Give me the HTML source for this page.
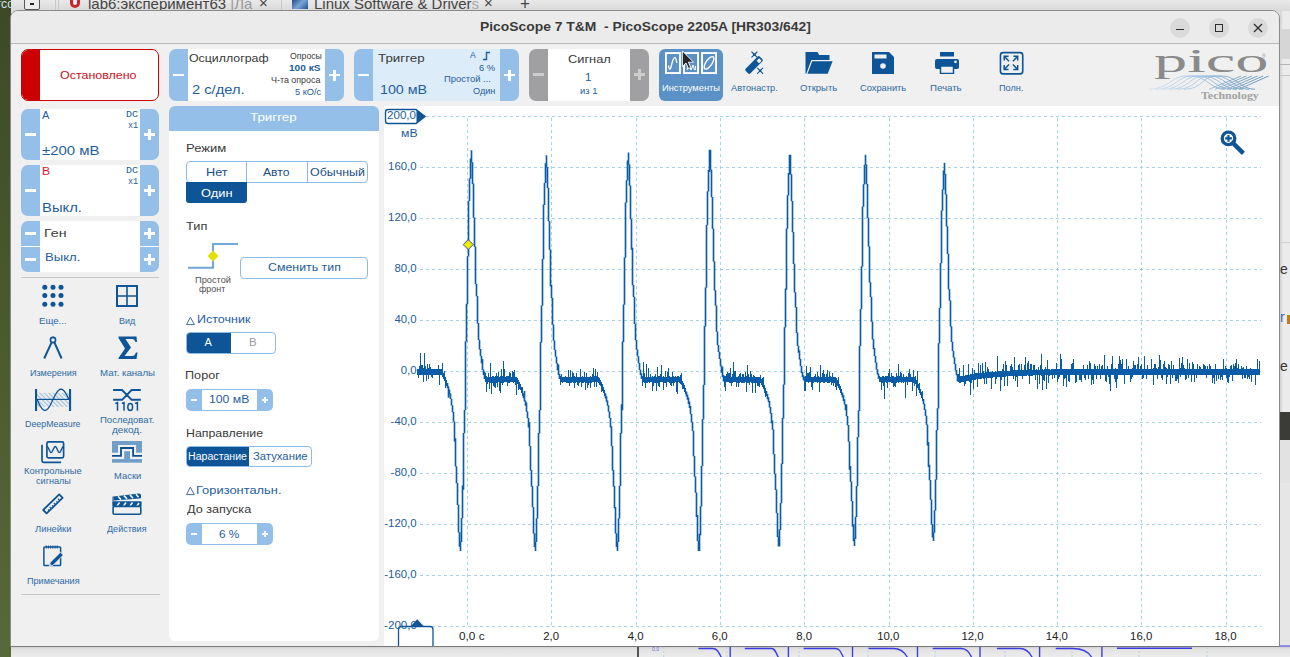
<!DOCTYPE html>
<html><head><meta charset="utf-8">
<style>
*{margin:0;padding:0;box-sizing:border-box}
html,body{width:1290px;height:657px;overflow:hidden;background:#dedede}
body{position:relative;font-family:"Liberation Sans",sans-serif;}
.a{position:absolute}
.t{position:absolute;white-space:pre;line-height:1}
.blue{color:#1d5e9c}
.pm{position:absolute;background:#93bfe8}
.pm:before,.pm:after{content:"";position:absolute;background:#fff;left:50%;top:50%}
.minus:before{width:11px;height:2.5px;margin-left:-5.5px;margin-top:-1.25px}
.minus:after{display:none}
.plus:before{width:11px;height:2.5px;margin-left:-5.5px;margin-top:-1.25px}
.plus:after{width:2.5px;height:11px;margin-left:-1.25px;margin-top:-5.5px}
.lbl{position:absolute;white-space:nowrap;line-height:1;font-size:10px;color:#2b6aa6;transform-origin:50% 0}
</style></head><body>
<!-- ===== background outside window ===== -->
<div class="a" style="left:0;top:0;width:1290px;height:11px;background:linear-gradient(#e9e9e9,#d9d9d9)"></div>
<div class="a" style="left:0;top:0;width:11px;height:657px;background:linear-gradient(#3d4926,#4a5a2f 50%,#57683a)"></div>
<div class="t" style="left:-3px;top:-2px;font-size:12px;color:#cfe3f5">гсо</div>
<!-- tabs -->
<div class="a" style="left:24px;top:-2px;width:16px;height:11.5px;border:1.5px solid #555;border-radius:2px;background:#ececec"></div>
<div class="a" style="left:30px;top:3px;width:4px;height:1.5px;background:#222"></div>
<div class="a" style="left:55px;top:0;width:1px;height:10px;background:#c8c8c8"></div>
<div class="a" style="left:58px;top:0;width:1px;height:10px;background:#c8c8c8"></div>
<div class="a" style="left:70px;top:0;width:10px;height:8px;background:#c9252b;border-radius:0 0 5px 5px"></div>
<div class="a" style="left:73px;top:0;width:4px;height:5px;background:#eee;border-radius:0 0 2px 2px"></div>
<div class="t" style="left:88px;top:-4.5px;font-size:15px;color:#444">lab6:эксперимент63 <span style="color:#999">|Ла</span></div>
<div class="t" style="left:259px;top:-5px;font-size:15px;color:#444">×</div>
<div class="a" style="left:281px;top:0;width:1px;height:10px;background:#c8c8c8"></div>
<div class="a" style="left:292px;top:0;width:16px;height:9px;background:linear-gradient(135deg,#1e4f8a,#7aa6d6,#1e4f8a)"></div>
<div class="t" style="left:314px;top:-4.5px;font-size:15px;color:#444">Linux Software &amp; Driver<span style="color:#aaa">s</span></div>
<div class="t" style="left:484px;top:-5px;font-size:15px;color:#444">×</div>
<div class="t" style="left:520px;top:-5px;font-size:17px;color:#444">+</div>
<!-- right strip -->
<div class="a" style="left:1280px;top:11px;width:10px;height:646px;background:#ebebeb"></div>
<div class="a" style="left:1280px;top:11px;width:3px;height:646px;background:linear-gradient(90deg,#d0d0d0,#ebebeb)"></div>
<div class="a" style="left:1280px;top:29px;width:10px;height:30px;background:#d6d6d6"></div>
<div class="a" style="left:1280px;top:64px;width:10px;height:1px;background:#b5b5b5"></div>
<div class="a" style="left:1280px;top:75px;width:10px;height:1px;background:#c5c5c5"></div>
<div class="a" style="left:1280px;top:242px;width:10px;height:1px;background:#cfcfcf"></div>
<div class="a" style="left:1280px;top:412px;width:10px;height:28px;background:#3b3b38"></div>
<div class="a" style="left:1280px;top:440px;width:10px;height:43px;background:#e2e2e2"></div>
<div class="a" style="left:1280px;top:483px;width:10px;height:163px;background:#e6e6e6"></div>
<div class="t" style="left:1280px;top:262px;font-size:14px;color:#333">e</div>
<div class="t" style="left:1280px;top:310px;font-size:14px;color:#2a6fb0">r</div>
<div class="a" style="left:1287px;top:315px;width:3px;height:9px;background:#c87a1a"></div>
<div class="t" style="left:1280px;top:359px;font-size:14px;color:#333">e</div>
<!-- bottom strip -->
<div class="a" style="left:11px;top:646px;width:1279px;height:11px;background:linear-gradient(#c9c9c9,#e2e2e2 3px,#ececec)"></div>
<div class="a" style="left:637px;top:646px;width:2px;height:11px;background:#555"></div>
<svg class="a" style="left:0;top:0" width="1290" height="657">
 <g stroke="#b8d4dc" stroke-width="1" stroke-dasharray="2 2"><path d="M663.7,647V657M727,647V657M799,647V657M868,647V657M935,647V657M1005,647V657M1072,647V657M1139,647V657M1207,647V657"/></g>
 <path d="M698.4,648.5H712.7C717.2,648.5 718.6,652 721.6,658M730.2,646.5V658M744.8,648.5H771.5C775.0,648.5 775.6,652 778.6,658M788.4,646.5V658M803.6,648.5H835.7C839.7,648.5 840.7,652 843.7,658M852.5,646.5V658M868.5,648.5H893.5C900.6,648.5 904.7,652 907.7,658M917.5,646.5V658M932.7,648.5H961.2C966.6,648.5 969.0,652 972.0,658M980,646.5V658M996.9,648.5H1020C1026.2,648.5 1029.5,652 1032.5,658M1039.6,646.5V658M1055.7,648.5H1072.5C1082.2,648.5 1089.0,652 1092.0,658M1101.9,646.5V658M1117,648.3H1192" fill="none" stroke="#3b3be6" stroke-width="1.4"/>
 <path d="M1280,646H1290" stroke="#5a5af0" stroke-width="1.2"/>
 <text x="652" y="651" font-size="5" fill="#6a6ae8" font-family="Liberation Sans">0,0</text>
</svg>
<!-- ===== window ===== -->
<div class="a" style="left:10px;top:10px;width:1270px;height:637px;border:1px solid #8a8a8a;border-radius:8px 8px 0 0;background:#f0f0f0;overflow:hidden">
</div>
<!-- title bar -->
<div class="a" style="left:11px;top:11px;width:1268px;height:33px;background:#ebebeb;border-radius:7px 7px 0 0;border-bottom:1px solid #bababa"></div>
<div class="a" style="left:1170px;top:18px;width:20px;height:20px;border-radius:50%;background:#dadada"></div>
<div class="a" style="left:1176px;top:29px;width:8px;height:1px;background:#2e2e2e"></div>
<div class="a" style="left:1209px;top:18px;width:20px;height:20px;border-radius:50%;background:#dadada"></div>
<div class="a" style="left:1215px;top:24px;width:8px;height:8px;border:1.3px solid #2e2e2e"></div>
<div class="a" style="left:1248px;top:18px;width:20px;height:20px;border-radius:50%;background:#dadada"></div>
<svg class="a" style="left:1248px;top:18px" width="20" height="20"><path d="M6,6L14,14M14,6L6,14" stroke="#2e2e2e" stroke-width="1.3"/></svg>

<!-- ===== toolbar ===== -->
<!-- stopped -->
<div class="a" style="left:21px;top:49px;width:138px;height:52px;border:1.3px solid #cc0000;border-radius:7px;background:#fff;overflow:hidden">
 <div class="a" style="left:0;top:0;width:18px;height:52px;background:#cc0000"></div>
</div>

<!-- oscilloscope -->
<div class="a" style="left:169px;top:49px;width:175px;height:52px;border-radius:7px;background:#93bfe8;overflow:hidden">
 <div class="a" style="left:19px;top:0;width:137px;height:52px;background:#fff"></div>
</div>
<div class="pm minus" style="left:169px;top:49px;width:19px;height:52px;background:transparent"></div>
<div class="pm plus" style="left:325px;top:49px;width:19px;height:52px;background:transparent"></div>

<!-- trigger -->
<div class="a" style="left:354px;top:49px;width:165px;height:52px;border-radius:7px;background:#93bfe8;overflow:hidden">
 <div class="a" style="left:19px;top:0;width:127px;height:52px;background:#ddecf9"></div>
</div>
<div class="pm minus" style="left:354px;top:49px;width:19px;height:52px;background:transparent"></div>
<div class="pm plus" style="left:500px;top:49px;width:19px;height:52px;background:transparent"></div>
<svg class="a" style="left:482px;top:51px" width="10" height="10"><path d="M1,8.5H4.5V1.5H8" fill="none" stroke="#1d5e9c" stroke-width="1.4"/></svg>

<!-- signal -->
<div class="a" style="left:529px;top:49px;width:120px;height:52px;border-radius:7px;background:#a0a0a3;overflow:hidden">
 <div class="a" style="left:19px;top:0;width:82px;height:52px;background:#fff"></div>
</div>
<div class="a" style="left:533px;top:73px;width:11px;height:2.5px;background:#cdcdcd"></div>
<div class="a" style="left:634px;top:73px;width:11px;height:2.5px;background:#cdcdcd"></div>
<div class="a" style="left:638.25px;top:68.5px;width:2.5px;height:11px;background:#cdcdcd"></div>

<!-- instruments -->
<div class="a" style="left:659px;top:49px;width:64px;height:52px;border-radius:6px;background:#5b91c6"></div>
<svg class="a" style="left:659px;top:48px" width="64" height="30">
 <g fill="none" stroke="#fff" stroke-width="1.9">
  <rect x="6.95" y="5.05" width="14" height="20"/>
  <rect x="25.05" y="5.05" width="14" height="20"/>
  <rect x="43.05" y="5.05" width="14" height="20"/>
 </g>
 <path d="M9.5,17.5C10,22 11,22.5 12,19 C13,15 14.5,9 16,9.5 C17,10 17.5,13 17.8,15" fill="none" stroke="#fff" stroke-width="1.3"/>
 <path d="M28,22L30,16L32,22M32,22L34,17L35.5,22M36.5,22V18" fill="none" stroke="#fff" stroke-width="1"/>
 <ellipse cx="50" cy="14.9" rx="3" ry="7.3" transform="rotate(35 50 14.9)" fill="none" stroke="#fff" stroke-width="1.4"/>
</svg>
<svg class="a" style="left:681px;top:50px" width="15" height="20"><path d="M1.4,0.9V16.5L5,13L7.5,18.5L9.8,17.5L7.4,12.2H12.5Z" fill="#262626" stroke="#fff" stroke-width="0.9" stroke-linejoin="round"/></svg>
<!-- toolbar icons -->
<svg class="a" style="left:740px;top:48px" width="30" height="30">
 <rect x="4" y="13.7" width="20" height="6.6" rx="1.4" transform="rotate(-45 14 17)" fill="#0d5596"/>
 <rect x="17.3" y="10.9" width="3.6" height="3.6" transform="rotate(-45 19.1 12.7)" fill="#f0f0f0"/>
 <g stroke="#0d5596" stroke-width="1.1" stroke-linecap="round">
  <path d="M11.8,4L17,9.2M17,4L11.8,9.2M17.5,20.2L22.7,25.4M22.7,20.2L17.5,25.4"/>
 </g>
 <circle cx="14.4" cy="6.6" r="1.2" fill="#0d5596"/><circle cx="20.1" cy="22.8" r="1.2" fill="#0d5596"/>
</svg>
<svg class="a" style="left:800px;top:48px" width="40" height="30">
 <path d="M5.5,4.1H17.4L19.2,7.1H29.5V13.2H12L7.6,25.8H5.5Z" fill="#0d5596"/>
 <path d="M12.2,13.2H32.6L27.7,25.8H7.5Z" fill="#0d5596" stroke="#f0f0f0" stroke-width="2.4" stroke-linejoin="miter"/>
 <path d="M12.2,13.2H32.6L27.7,25.8H7.5Z" fill="#0d5596"/>
 <path d="M5.5,25.8H7.6" stroke="#0d5596" stroke-width="0"/>
</svg>
<svg class="a" style="left:872px;top:52px" width="23" height="22">
 <path d="M0,0H17L22,5V22H0Z" fill="#0d5596"/>
 <rect x="2.5" y="2.5" width="12" height="4" fill="#f0f0f0"/>
 <circle cx="11" cy="14" r="2.8" fill="#f0f0f0"/>
</svg>
<svg class="a" style="left:935px;top:52px" width="24" height="22">
 <rect x="5" y="0" width="14" height="4.5" fill="#0d5596"/>
 <rect x="0" y="7" width="24" height="10" rx="2" fill="#0d5596"/>
 <rect x="5.5" y="14" width="13" height="7.5" fill="#f0f0f0" stroke="#0d5596" stroke-width="1.5"/>
 <circle cx="20.5" cy="9.8" r="1.4" fill="#f0f0f0"/>
</svg>
<svg class="a" style="left:996px;top:48px" width="30" height="30">
 <rect x="4.45" y="4.65" width="22.3" height="21.2" rx="2.6" fill="none" stroke="#0d5596" stroke-width="1.6"/>
 <g stroke="#0d5596" stroke-width="1.5" fill="none">
  <path d="M8.2,12.6V8.2H12.6M8.2,8.2L13,13.2"/>
  <path d="M21.7,12.6V8.2H17.3M21.7,8.2L16.9,13.2"/>
  <path d="M8.2,17.1V21.5H12.6M8.2,21.5L13,16.5"/>
  <path d="M21.7,17.1V21.5H17.3M21.7,21.5L16.9,16.5"/>
 </g>
</svg>
<!-- pico logo -->
<svg class="a" style="left:1145px;top:72px" width="130" height="22">
 <defs><linearGradient id="lg" gradientUnits="userSpaceOnUse" x1="0" y1="0" x2="125" y2="0"><stop offset="0" stop-color="#cfe2f4"/><stop offset="0.45" stop-color="#9cc0e2"/><stop offset="1" stop-color="#3f77a8"/></linearGradient></defs>
 <path d="M4,17.3C22,17.3 28,4 40,4L48,4C60,4 66,17.3 80,17.3M64,17.3L96.0,4M11,17.3C29,17.3 34,4 46,4L54,4C66,4 72,17.3 86,17.3M70,17.3L101.5,4M18,17.3C36,17.3 40,4 52,4L60,4C72,4 78,17.3 92,17.3M76,17.3L107.0,4M25,17.3C43,17.3 46,4 58,4L66,4C78,4 84,17.3 98,17.3M82,17.3L112.5,4M32,17.3C50,17.3 52,4 64,4L72,4C84,4 90,17.3 104,17.3M88,17.3L118.0,4M39,17.3C57,17.3 58,4 70,4L78,4C90,4 96,17.3 110,17.3M94,17.3L123.5,4" fill="none" stroke="url(#lg)" stroke-width="0.8"/>
</svg>
<div class="t" style="left:1262px;top:54px;font-size:5px;color:#999">®</div>
<div class="t" style="left:480.00px;top:20.42px;font-size:13.5px;color:#3a3a3a;font-weight:bold;transform:scaleX(1.027);transform-origin:0 0;">PicoScope 7 T&amp;M  - PicoScope 2205A [HR303/642]</div>
<div class="t" style="left:60.14px;top:70.32px;font-size:11.5px;color:#cc1018;transform:scaleX(1.083);transform-origin:0 0;">Остановлено</div>
<div class="t" style="left:189.04px;top:52.75px;font-size:11px;color:#3a3a3a;transform:scaleX(1.123);transform-origin:0 0;">Осциллограф</div>
<div class="t" style="left:192.07px;top:84.25px;font-size:12.3px;color:#1d5e9c;transform:scaleX(1.193);transform-origin:0 0;">2 с/дел.</div>
<div class="t" style="left:289.81px;top:52.42px;font-size:8.8px;color:#3a3a3a;transform:scaleX(0.993);transform-origin:0 0;">Опросы</div>
<div class="t" style="left:289.29px;top:64.19px;font-size:8.9px;color:#1d5e9c;font-weight:bold;transform:scaleX(1.137);transform-origin:0 0;">100 кS</div>
<div class="t" style="left:270.99px;top:76.12px;font-size:8.8px;color:#3a3a3a;transform:scaleX(1.013);transform-origin:0 0;">Ч-та опроса</div>
<div class="t" style="left:295.13px;top:88.22px;font-size:8.8px;color:#1d5e9c;transform:scaleX(1.054);transform-origin:0 0;">5 кО/с</div>
<div class="t" style="left:378.33px;top:52.75px;font-size:11px;color:#3a3a3a;transform:scaleX(1.217);transform-origin:0 0;">Триггер</div>
<div class="t" style="left:379.93px;top:84.25px;font-size:12.3px;color:#1d5e9c;transform:scaleX(1.160);transform-origin:0 0;">100 мВ</div>
<div class="t" style="left:470.10px;top:51.22px;font-size:8.8px;color:#1d5e9c;transform:scaleX(0.974);transform-origin:0 0;">A</div>
<div class="t" style="left:478.73px;top:63.52px;font-size:8.8px;color:#1d5e9c;transform:scaleX(1.067);transform-origin:0 0;">6 %</div>
<div class="t" style="left:443.65px;top:75.32px;font-size:8.8px;color:#1d5e9c;transform:scaleX(1.066);transform-origin:0 0;">Простой ...</div>
<div class="t" style="left:473.19px;top:87.22px;font-size:8.8px;color:#1d5e9c;transform:scaleX(1.039);transform-origin:0 0;">Один</div>
<div class="t" style="left:567.76px;top:53.65px;font-size:11px;color:#3a3a3a;transform:scaleX(1.166);transform-origin:0 0;">Сигнал</div>
<div class="t" style="left:585.12px;top:71.88px;font-size:10.5px;color:#1d5e9c;transform:scaleX(1.117);transform-origin:0 0;">1</div>
<div class="t" style="left:579.84px;top:87.32px;font-size:8.8px;color:#1d5e9c;transform:scaleX(1.068);transform-origin:0 0;">из 1</div>
<div class="t" style="left:661.86px;top:82.77px;font-size:9.8px;color:#ffffff;transform:scaleX(0.949);transform-origin:0 0;">Инструменты</div>
<div class="t" style="left:731.30px;top:82.87px;font-size:9.8px;color:#2b6aa6;transform:scaleX(0.940);transform-origin:0 0;">Автонастр.</div>
<div class="t" style="left:799.67px;top:82.87px;font-size:9.8px;color:#2b6aa6;transform:scaleX(0.967);transform-origin:0 0;">Открыть</div>
<div class="t" style="left:859.73px;top:82.87px;font-size:9.8px;color:#2b6aa6;transform:scaleX(0.949);transform-origin:0 0;">Сохранить</div>
<div class="t" style="left:930.43px;top:82.87px;font-size:9.8px;color:#2b6aa6;transform:scaleX(0.986);transform-origin:0 0;">Печать</div>
<div class="t" style="left:998.67px;top:82.87px;font-size:9.8px;color:#2b6aa6;transform:scaleX(0.937);transform-origin:0 0;">Полн.</div>
<div class="t" style="left:1154.20px;top:44.88px;font-size:33px;color:#8a8a8a;font-family:'Liberation Serif',serif;transform:scaleX(2.015);transform-origin:0 0;">pico</div>
<div class="t" style="left:1201.12px;top:90.98px;font-size:10.5px;color:#a2a2a2;font-weight:bold;font-family:'Liberation Serif',serif;transform:scaleX(1.134);transform-origin:0 0;">Technology</div>
<!-- ===== sidebar ===== -->
<!-- channel A -->
<div class="a" style="left:21px;top:109px;width:138px;height:51px;border-radius:7px;background:#93bfe8;overflow:hidden">
 <div class="a" style="left:19px;top:0;width:100px;height:51px;background:#fff"></div>
</div>
<div class="pm minus" style="left:21px;top:109px;width:19px;height:51px;background:transparent"></div>
<div class="pm plus" style="left:140px;top:109px;width:19px;height:51px;background:transparent"></div>
<!-- channel B -->
<div class="a" style="left:21px;top:165px;width:138px;height:51px;border-radius:7px;background:#93bfe8;overflow:hidden">
 <div class="a" style="left:19px;top:0;width:100px;height:51px;background:#fff"></div>
</div>
<div class="pm minus" style="left:21px;top:165px;width:19px;height:51px;background:transparent"></div>
<div class="pm plus" style="left:140px;top:165px;width:19px;height:51px;background:transparent"></div>
<!-- gen -->
<div class="a" style="left:21px;top:221px;width:138px;height:51px;border-radius:7px;background:#93bfe8;overflow:hidden">
 <div class="a" style="left:19px;top:0;width:100px;height:51px;background:#fff"></div>
 <div class="a" style="left:0;top:25px;width:138px;height:1px;background:#fff"></div>
</div>
<div class="pm minus" style="left:21px;top:221px;width:19px;height:25px;background:transparent"></div>
<div class="pm plus" style="left:140px;top:221px;width:19px;height:25px;background:transparent"></div>
<div class="pm minus" style="left:21px;top:247px;width:19px;height:25px;background:transparent"></div>
<div class="pm plus" style="left:140px;top:247px;width:19px;height:25px;background:transparent"></div>
<div class="a" style="left:21px;top:277px;width:138px;height:1px;background:#c8c8c8"></div>

<!-- icons -->
<svg class="a" style="left:42px;top:284px" width="22" height="23" fill="#0d5596">
 <circle cx="2.8" cy="3.2" r="2.5"/><circle cx="11" cy="3.2" r="2.5"/><circle cx="19" cy="3.2" r="2.5"/>
 <circle cx="2.8" cy="11.6" r="2.5"/><circle cx="11" cy="11.6" r="2.5"/><circle cx="19" cy="11.6" r="2.5"/>
 <circle cx="2.8" cy="20.3" r="2.5"/><circle cx="11" cy="20.3" r="2.5"/><circle cx="19" cy="20.3" r="2.5"/>
</svg>
<svg class="a" style="left:116px;top:285px" width="22" height="22">
 <rect x="1" y="1" width="20" height="20" fill="none" stroke="#0d5596" stroke-width="2"/>
 <path d="M11,1V21M1,11H21" stroke="#0d5596" stroke-width="1.6"/>
</svg>
<svg class="a" style="left:43px;top:336px" width="20" height="24">
 <circle cx="10" cy="4" r="2.6" fill="none" stroke="#0d5596" stroke-width="1.6"/>
 <path d="M10,0.5V2" stroke="#0d5596" stroke-width="1.4"/>
 <path d="M8.6,6.3L1.2,22.5M11.4,6.3L18.6,22.5" stroke="#0d5596" stroke-width="2" fill="none"/>
</svg>
<svg class="a" style="left:118px;top:336px" width="20" height="24">
 <path d="M0.5,0.5H18.5L19,6H17.5C16.5,3.5 15.5,3 13,3H7.5L13,11.5L6.5,20H14C16,20 17,19 18,16.5H19.5L18.5,23H0.5V22L7,12.5L0.5,2Z" fill="#0d5596"/>
</svg>
<svg class="a" style="left:32px;top:386px" width="42" height="28">
 <defs><pattern id="hat" width="3.2" height="3.2" patternUnits="userSpaceOnUse" patternTransform="rotate(-45)"><rect width="1.1" height="3.2" fill="#9dbddb"/></pattern></defs>
 <rect x="5" y="6.8" width="32" height="14.1" fill="url(#hat)"/>
 <rect x="3" y="3" width="2.1" height="22" fill="#0d5596"/>
 <rect x="37" y="3" width="2.1" height="22" fill="#0d5596"/>
 <path d="M5,13.4H37" stroke="#0d5596" stroke-width="1.2"/>
 <path d="M5.00,13.40 L5.50,14.47 L6.00,15.53 L6.50,16.56 L7.00,17.57 L7.50,18.54 L8.00,19.46 L8.50,20.31 L9.00,21.11 L9.50,21.83 L10.00,22.46 L10.50,23.01 L11.00,23.47 L11.50,23.83 L12.00,24.09 L12.50,24.25 L13.00,24.30 L13.50,24.25 L14.00,24.09 L14.50,23.83 L15.00,23.47 L15.50,23.01 L16.00,22.46 L16.50,21.83 L17.00,21.11 L17.50,20.31 L18.00,19.46 L18.50,18.54 L19.00,17.57 L19.50,16.56 L20.00,15.53 L20.50,14.47 L21.00,13.40 L21.50,12.40 L22.00,11.41 L22.50,10.44 L23.00,9.50 L23.50,8.59 L24.00,7.73 L24.50,6.93 L25.00,6.19 L25.50,5.52 L26.00,4.92 L26.50,4.40 L27.00,3.98 L27.50,3.64 L28.00,3.40 L28.50,3.25 L29.00,3.20 L29.50,3.25 L30.00,3.40 L30.50,3.64 L31.00,3.98 L31.50,4.40 L32.00,4.92 L32.50,5.52 L33.00,6.19 L33.50,6.93 L34.00,7.73 L34.50,8.59 L35.00,9.50 L35.50,10.44 L36.00,11.41 L36.50,12.40 L37.00,13.40" fill="none" stroke="#0d5596" stroke-width="1.3"/>
</svg>
<svg class="a" style="left:108px;top:386px" width="38" height="28">
 <path d="M5.1,4H14.1L23.6,13.8H32.8M5.1,13.8H14.1L23.6,4H32.8" fill="none" stroke="#0d5596" stroke-width="1.9"/>
</svg>
<svg class="a" style="left:36px;top:438px" width="34" height="28">
 <path d="M6,6.8V22.8Q6,24.3 7.5,24.3H25.1" fill="none" stroke="#0d5596" stroke-width="1.7"/>
 <rect x="10.9" y="3.9" width="16.7" height="15.9" rx="1.5" fill="none" stroke="#0d5596" stroke-width="1.7"/>
 <path d="M11.00,8.50 L11.41,8.65 L11.82,9.07 L12.24,9.74 L12.65,10.57 L13.06,11.50 L13.47,12.43 L13.89,13.26 L14.30,13.93 L14.71,14.35 L15.12,14.50 L15.54,14.35 L15.95,13.93 L16.36,13.26 L16.77,12.43 L17.19,11.50 L17.60,10.57 L18.01,9.74 L18.43,9.07 L18.84,8.65 L19.25,8.50 L19.66,8.65 L20.07,9.07 L20.49,9.74 L20.90,10.57 L21.31,11.50 L21.73,12.43 L22.14,13.26 L22.55,13.93 L22.96,14.35 L23.38,14.50 L23.79,14.35 L24.20,13.93 L24.61,13.26 L25.02,12.43 L25.44,11.50 L25.85,10.57 L26.26,9.74 L26.68,9.07 L27.09,8.65 L27.50,8.50" fill="none" stroke="#0d5596" stroke-width="1.4"/>
</svg>
<svg class="a" style="left:108px;top:438px" width="38" height="28">
 <g fill="#6f9ec8">
  <rect x="4" y="3" width="30" height="4"/><rect x="4" y="3" width="6" height="11.7"/><rect x="28.1" y="3" width="5.9" height="11.7"/>
  <rect x="4" y="21.1" width="30" height="3.6"/><rect x="16.2" y="13.2" width="5.8" height="8"/>
 </g>
 <path d="M4,17.8H13V10H25.1V17.8H34" fill="none" stroke="#0d4f90" stroke-width="1.8"/>
</svg>
<svg class="a" style="left:38px;top:490px" width="30" height="28">
 <path d="M21.2,4.4L24.6,7.8L8.6,23.4L5.2,20Z" fill="none" stroke="#0d5596" stroke-width="1.8" stroke-linejoin="round"/>
 <path d="M21.72,10.61L19.90,8.75M19.64,12.64L18.38,11.35M17.56,14.66L15.74,12.80M15.48,16.69L14.22,15.40M13.40,18.72L11.58,16.86M11.32,20.75L10.06,19.46" stroke="#0d5596" stroke-width="1.1"/>
</svg>
<svg class="a" style="left:108px;top:490px" width="38" height="28">
 <path d="M5.5,6.5L31,3.6Q33,3.5 33,5.5V7.5Q33,8.3 31.5,8.5L5.5,10.5Z" fill="#0d5596"/>
 <path d="M10,6.3L13,9.6M16,5.6L19,8.9M22,4.9L25,8.2M28,4.3L30.5,7.3" stroke="#f0f0f0" stroke-width="1.6"/>
 <path d="M4.5,6.6L5.5,6.5V11.5H4.5Z" fill="#0d5596"/>
 <rect x="4.3" y="11.3" width="29.3" height="5.3" rx="1" fill="#0d5596"/>
 <path d="M9,16L11.5,12.5M15.5,16L18,12.5M22,16L24.5,12.5M29,16L31,13" stroke="#f0f0f0" stroke-width="1.6"/>
 <rect x="5.1" y="16.4" width="27.7" height="7.9" rx="1.2" fill="#f0f0f0" stroke="#0d5596" stroke-width="1.6"/>
</svg>
<svg class="a" style="left:38px;top:541px" width="30" height="28">
 <rect x="5.9" y="5.9" width="16.7" height="18.6" rx="0.8" fill="none" stroke="#0d5596" stroke-width="1.5"/>
 <path d="M8.2,4.6V7.4M10.4,4.6V7.4M12.6,4.6V7.4M14.8,4.6V7.4M17,4.6V7.4M19.2,4.6V7.4" stroke="#0d5596" stroke-width="1.1"/>
 <path d="M11,25.6L12.3,21.3L22.5,11.2L25.3,14L15.2,24.2Z" fill="#0d5596" stroke="#f0f0f0" stroke-width="0.8"/>
 <path d="M12.4,22.9L13.8,24.3L11.6,25Z" fill="#f0f0f0"/>
</svg>
<div class="a" style="left:21px;top:594px;width:139px;height:1px;background:#c8c8c8"></div>
<svg class="a" style="left:108px;top:400px" width="38" height="14" fill="none" stroke="#0d5596" stroke-width="1.5">
 <path d="M7.3,3.4L9.5,2.6V10.7M13.8,3.4L16,2.6V10.7M27,3.4L29.4,2.6V10.7"/>
 <ellipse cx="22.2" cy="6.9" rx="2.4" ry="3.5"/>
</svg>
<div class="t" style="left:42.35px;top:111.15px;font-size:10.3px;color:#1d5e9c;transform:scaleX(1.073);transform-origin:0 0;">A</div>
<div class="t" style="left:125.64px;top:110.84px;font-size:8.5px;color:#1d5e9c;font-family:'Liberation Mono',monospace;transform:scaleX(1.187);transform-origin:0 0;">DC</div>
<div class="t" style="left:127.82px;top:121.94px;font-size:8.5px;color:#1d5e9c;font-family:'Liberation Mono',monospace;transform:scaleX(0.990);transform-origin:0 0;">x1</div>
<div class="t" style="left:42.45px;top:145.44px;font-size:12.3px;color:#1d5e9c;transform:scaleX(1.216);transform-origin:0 0;">±200 мВ</div>
<div class="t" style="left:41.63px;top:167.34px;font-size:10.3px;color:#e8102c;transform:scaleX(1.180);transform-origin:0 0;">B</div>
<div class="t" style="left:125.64px;top:166.84px;font-size:8.5px;color:#1d5e9c;font-family:'Liberation Mono',monospace;transform:scaleX(1.187);transform-origin:0 0;">DC</div>
<div class="t" style="left:127.82px;top:177.94px;font-size:8.5px;color:#1d5e9c;font-family:'Liberation Mono',monospace;transform:scaleX(0.990);transform-origin:0 0;">x1</div>
<div class="t" style="left:41.72px;top:201.74px;font-size:12.3px;color:#1d5e9c;transform:scaleX(1.204);transform-origin:0 0;">Выкл.</div>
<div class="t" style="left:44.16px;top:227.55px;font-size:11px;color:#3a3a3a;transform:scaleX(1.292);transform-origin:0 0;">Ген</div>
<div class="t" style="left:44.55px;top:252.45px;font-size:11px;color:#1d5e9c;transform:scaleX(1.192);transform-origin:0 0;">Выкл.</div>
<div class="t" style="left:38.53px;top:315.67px;font-size:9.8px;color:#2b6aa6;transform:scaleX(0.981);transform-origin:0 0;">Еще...</div>
<div class="t" style="left:118.58px;top:315.67px;font-size:9.8px;color:#2b6aa6;transform:scaleX(0.919);transform-origin:0 0;">Вид</div>
<div class="t" style="left:29.68px;top:367.67px;font-size:9.8px;color:#2b6aa6;transform:scaleX(0.919);transform-origin:0 0;">Измерения</div>
<div class="t" style="left:99.63px;top:367.67px;font-size:9.8px;color:#2b6aa6;transform:scaleX(0.984);transform-origin:0 0;">Мат. каналы</div>
<div class="t" style="left:24.89px;top:419.47px;font-size:9.8px;color:#2b6aa6;transform:scaleX(0.902);transform-origin:0 0;">DeepMeasure</div>
<div class="t" style="left:99.74px;top:414.52px;font-size:9.8px;color:#2b6aa6;transform:scaleX(0.971);transform-origin:0 0;">Последоват.</div>
<div class="t" style="left:112.00px;top:424.57px;font-size:9.8px;color:#2b6aa6;transform:scaleX(1.027);transform-origin:0 0;">декод.</div>
<div class="t" style="left:23.75px;top:466.17px;font-size:9.8px;color:#2b6aa6;transform:scaleX(0.954);transform-origin:0 0;">Контрольные</div>
<div class="t" style="left:35.64px;top:476.07px;font-size:9.8px;color:#2b6aa6;transform:scaleX(0.929);transform-origin:0 0;">сигналы</div>
<div class="t" style="left:113.55px;top:471.27px;font-size:9.8px;color:#2b6aa6;transform:scaleX(0.961);transform-origin:0 0;">Маски</div>
<div class="t" style="left:35.31px;top:523.57px;font-size:9.8px;color:#2b6aa6;transform:scaleX(0.959);transform-origin:0 0;">Линейки</div>
<div class="t" style="left:107.45px;top:523.57px;font-size:9.8px;color:#2b6aa6;transform:scaleX(0.921);transform-origin:0 0;">Действия</div>
<div class="t" style="left:26.62px;top:575.57px;font-size:9.8px;color:#2b6aa6;transform:scaleX(0.930);transform-origin:0 0;">Примечания</div>
<!-- ===== trigger panel ===== -->
<div class="a" style="left:169px;top:106px;width:210px;height:535px;background:#fff;border-radius:6px"></div>
<div class="a" style="left:169px;top:106px;width:210px;height:25px;background:#93bfe8;border-radius:6px 6px 0 0"></div>
<!-- mode buttons -->
<div class="a" style="left:186px;top:161px;width:182px;height:22px;border:1px solid #8dbbe6;border-radius:4px"></div>
<div class="a" style="left:246px;top:162px;width:1px;height:20px;background:#8dbbe6"></div>
<div class="a" style="left:307px;top:162px;width:1px;height:20px;background:#8dbbe6"></div>
<div class="a" style="left:186px;top:182px;width:61px;height:21px;background:#0d5596;border-radius:0 0 3px 3px"></div>

<svg class="a" style="left:186px;top:241px" width="54" height="30">
 <path d="M2,26.8H27V2.9H52" fill="none" stroke="#70a6da" stroke-width="2"/>
 <path d="M27,9.5L32.5,15L27,20.5L21.5,15Z" fill="#e6e000"/>
</svg>
<div class="a" style="left:240px;top:257px;width:128px;height:22px;border:1px solid #8dbbe6;border-radius:4px"></div>

<div class="a" style="left:186px;top:332px;width:90px;height:22px;border:1px solid #8dbbe6;border-radius:4px;overflow:hidden">
 <div class="a" style="left:0;top:0;width:44px;height:22px;background:#0d5596"></div>
</div>

<div class="a" style="left:186px;top:389px;width:87px;height:22px;border-radius:5px;background:#93bfe8;overflow:hidden">
 <div class="a" style="left:16px;top:1px;width:55px;height:20px;background:#fff"></div>
</div>
<div class="a" style="left:191px;top:399px;width:6px;height:2px;background:#fff"></div>
<div class="a" style="left:262px;top:399px;width:6px;height:2px;background:#fff"></div>
<div class="a" style="left:264px;top:397px;width:2px;height:6px;background:#fff"></div>

<div class="a" style="left:186px;top:446px;width:126px;height:21px;border:1px solid #8dbbe6;border-radius:4px;overflow:hidden">
 <div class="a" style="left:0;top:0;width:62px;height:21px;background:#0d5596"></div>
</div>

<div class="a" style="left:186px;top:523px;width:87px;height:22px;border-radius:5px;background:#93bfe8;overflow:hidden">
 <div class="a" style="left:16px;top:1px;width:55px;height:20px;background:#fff"></div>
</div>
<div class="a" style="left:191px;top:533px;width:6px;height:2px;background:#fff"></div>
<div class="a" style="left:262px;top:533px;width:6px;height:2px;background:#fff"></div>
<div class="a" style="left:264px;top:531px;width:2px;height:6px;background:#fff"></div>
<svg class="a" style="left:186px;top:316px" width="10" height="10"><path d="M4.3,1.2L8.4,8.6H0.6Z" fill="none" stroke="#2a5f95" stroke-width="0.9"/></svg>
<svg class="a" style="left:186px;top:486px" width="10" height="10"><path d="M4.3,1.2L8.4,8.6H0.6Z" fill="none" stroke="#2a5f95" stroke-width="0.9"/></svg>
<div class="t" style="left:249.73px;top:112.14px;font-size:11.3px;color:#ffffff;transform:scaleX(1.184);transform-origin:0 0;">Триггер</div>
<div class="t" style="left:185.66px;top:142.65px;font-size:11px;color:#3a3a3a;transform:scaleX(1.186);transform-origin:0 0;">Режим</div>
<div class="t" style="left:205.68px;top:166.75px;font-size:11px;color:#1a4f86;transform:scaleX(1.155);transform-origin:0 0;">Нет</div>
<div class="t" style="left:263.20px;top:166.55px;font-size:11px;color:#1a4f86;transform:scaleX(1.105);transform-origin:0 0;">Авто</div>
<div class="t" style="left:309.74px;top:166.55px;font-size:11px;color:#1a4f86;transform:scaleX(1.128);transform-origin:0 0;">Обычный</div>
<div class="t" style="left:201.12px;top:187.85px;font-size:11px;color:#ffffff;transform:scaleX(1.169);transform-origin:0 0;">Один</div>
<div class="t" style="left:186.34px;top:220.55px;font-size:11px;color:#3a3a3a;transform:scaleX(1.162);transform-origin:0 0;">Тип</div>
<div class="t" style="left:194.76px;top:275.55px;font-size:9px;color:#505050;transform:scaleX(1.027);transform-origin:0 0;">Простой</div>
<div class="t" style="left:198.74px;top:284.85px;font-size:9px;color:#505050;transform:scaleX(0.994);transform-origin:0 0;">фронт</div>
<div class="t" style="left:267.78px;top:262.25px;font-size:11px;color:#1d5e9c;transform:scaleX(1.124);transform-origin:0 0;">Сменить тип</div>
<div class="t" style="left:196.60px;top:314.15px;font-size:11px;color:#1d5e9c;transform:scaleX(1.137);transform-origin:0 0;">Источник</div>
<div class="t" style="left:204.40px;top:337.40px;font-size:11px;color:#ffffff;">A</div>
<div class="t" style="left:249.07px;top:337.40px;font-size:11px;color:#9a9a9a;transform:scaleX(1.054);transform-origin:0 0;">B</div>
<div class="t" style="left:185.49px;top:370.25px;font-size:11px;color:#3a3a3a;transform:scaleX(1.150);transform-origin:0 0;">Порог</div>
<div class="t" style="left:208.68px;top:394.35px;font-size:11px;color:#1d5e9c;transform:scaleX(1.111);transform-origin:0 0;">100 мВ</div>
<div class="t" style="left:185.71px;top:428.05px;font-size:11px;color:#3a3a3a;transform:scaleX(1.122);transform-origin:0 0;">Направление</div>
<div class="t" style="left:187.75px;top:452.30px;font-size:10px;color:#ffffff;transform:scaleX(1.060);transform-origin:0 0;">Нарастание</div>
<div class="t" style="left:252.50px;top:451.45px;font-size:11px;color:#1d5e9c;transform:scaleX(1.028);transform-origin:0 0;">Затухание</div>
<div class="t" style="left:196.47px;top:484.55px;font-size:11px;color:#1d5e9c;transform:scaleX(1.171);transform-origin:0 0;">Горизонтальн.</div>
<div class="t" style="left:186.64px;top:504.45px;font-size:11px;color:#3a3a3a;transform:scaleX(1.148);transform-origin:0 0;">До запуска</div>
<div class="t" style="left:219.01px;top:528.85px;font-size:11px;color:#1d5e9c;transform:scaleX(1.075);transform-origin:0 0;">6 %</div>
<!-- ===== scope ===== -->
<div class="a" style="left:384px;top:105.5px;width:895px;height:540.5px;background:#fff"></div>
<svg class="a" style="left:0;top:0" width="1290" height="657">
<g stroke="#a2d4e6" stroke-width="1" stroke-dasharray="3 3" fill="none">
<path d="M426,116.5H1261"/>
<path d="M420,167.5H1261"/>
<path d="M420,218.5H1261"/>
<path d="M420,269.5H1261"/>
<path d="M420,320.5H1261"/>
<path d="M420,371.5H1261"/>
<path d="M420,422.5H1261"/>
<path d="M420,473.5H1261"/>
<path d="M420,524.5H1261"/>
<path d="M420,575.5H1261"/>
<path d="M420,626.5H1261"/>
<path d="M467.5,118V627"/>
<path d="M551.5,118V627"/>
<path d="M636.5,118V627"/>
<path d="M720.5,118V627"/>
<path d="M804.5,118V627"/>
<path d="M889.5,118V627"/>
<path d="M973.5,118V627"/>
<path d="M1057.5,118V627"/>
<path d="M1141.5,118V627"/>
<path d="M1226.5,118V627"/>
</g>
<path d="M417.5,369V375M418.5,369V378M419.5,366V375M420.5,353V375M421.5,365V375M422.5,365V375M423.5,368V382M424.5,353V375M425.5,366V375M426.5,369V381M427.5,364V375M428.5,368V379M429.5,364V375M430.5,367V375M431.5,369V377M432.5,369V378M433.5,369V375M434.5,369V375M435.5,369V375M436.5,369V375M437.5,369V375M438.5,365V375M439.5,369V385M440.5,369V375M441.5,369V375M442.5,363V377M443.5,373V379M444.5,371V381M445.5,377V388M446.5,380V386M485.5,373V382M486.5,376V392M487.5,377V384M488.5,373V382M489.5,377V389M490.5,363V383M491.5,377V394M492.5,376V383M493.5,376V386M494.5,377V387M495.5,376V388M496.5,373V383M497.5,376V387M498.5,372V382M499.5,377V391M500.5,376V393M501.5,369V383M502.5,376V385M503.5,361V383M504.5,369V382M505.5,377V382M506.5,376V382M507.5,376V386M508.5,376V383M509.5,372V383M510.5,373V382M511.5,377V382M512.5,371V382M513.5,372V383M514.5,370V382M515.5,377V385M516.5,377V395M517.5,378V384M518.5,380V390M519.5,382V389M520.5,384V390M521.5,387V393M522.5,387V396M560.5,376V385M561.5,374V382M562.5,377V383M563.5,377V382M564.5,377V382M565.5,376V382M566.5,377V383M567.5,377V383M568.5,370V383M569.5,377V386M570.5,370V383M571.5,377V383M572.5,372V382M573.5,373V383M574.5,376V388M575.5,377V383M576.5,373V382M577.5,377V385M578.5,377V386M579.5,377V383M580.5,369V382M581.5,377V387M582.5,376V383M583.5,377V383M584.5,372V382M585.5,377V390M586.5,373V383M587.5,377V388M588.5,377V385M589.5,377V383M590.5,376V388M591.5,377V383M592.5,374V382M593.5,368V382M594.5,376V387M595.5,369V382M596.5,376V387M597.5,372V382M598.5,377V383M599.5,378V385M600.5,380V386M601.5,382V392M602.5,384V391M603.5,387V393M604.5,390V396M642.5,376V386M643.5,362V382M644.5,373V383M645.5,377V388M646.5,364V383M647.5,377V383M648.5,368V382M649.5,377V383M650.5,374V382M651.5,377V382M652.5,376V391M653.5,377V386M654.5,376V383M655.5,374V383M656.5,377V391M657.5,367V383M658.5,376V386M659.5,376V387M660.5,374V382M661.5,365V382M662.5,377V382M663.5,376V390M664.5,377V383M665.5,371V383M666.5,377V387M667.5,372V382M668.5,368V382M669.5,376V383M670.5,377V385M671.5,377V386M672.5,372V383M673.5,376V386M674.5,377V383M675.5,376V382M676.5,377V392M677.5,376V394M678.5,376V382M679.5,377V383M680.5,375V384M681.5,373V385M682.5,381V389M683.5,383V389M684.5,385V392M685.5,388V394M724.5,376V387M725.5,376V391M726.5,374V382M727.5,372V382M728.5,373V382M729.5,373V383M730.5,368V383M731.5,377V386M732.5,374V383M733.5,362V382M734.5,371V382M735.5,371V382M736.5,377V387M737.5,377V383M738.5,376V387M739.5,374V383M740.5,373V382M741.5,377V383M742.5,374V383M743.5,374V383M744.5,377V383M745.5,372V382M746.5,376V392M747.5,365V383M748.5,374V383M749.5,377V385M750.5,371V382M751.5,374V383M752.5,377V393M753.5,375V383M754.5,376V383M755.5,377V393M756.5,377V383M757.5,377V386M758.5,377V386M759.5,377V387M760.5,375V383M761.5,379V385M762.5,378V387M763.5,377V389M764.5,385V393M765.5,388V397M804.5,377V391M805.5,376V391M806.5,366V382M807.5,373V382M808.5,373V383M809.5,372V382M810.5,367V382M811.5,377V387M812.5,377V390M813.5,377V383M814.5,376V382M815.5,374V382M816.5,377V382M817.5,372V383M818.5,376V382M819.5,377V392M820.5,365V383M821.5,377V382M822.5,373V382M823.5,370V383M824.5,374V383M825.5,377V382M826.5,374V382M827.5,370V383M828.5,377V383M829.5,372V383M830.5,376V382M831.5,377V385M832.5,373V383M833.5,377V386M834.5,377V383M835.5,377V387M836.5,378V390M837.5,380V386M838.5,377V388M839.5,384V390M840.5,386V393M841.5,389V395M879.5,376V382M880.5,377V382M881.5,377V390M882.5,376V383M883.5,376V386M884.5,377V399M885.5,376V382M886.5,376V383M887.5,376V388M888.5,373V382M889.5,369V382M890.5,377V382M891.5,373V383M892.5,376V383M893.5,376V387M894.5,377V386M895.5,377V387M896.5,373V383M897.5,376V382M898.5,364V383M899.5,376V382M900.5,372V382M901.5,373V383M902.5,377V382M903.5,374V383M904.5,377V382M905.5,377V398M906.5,376V382M907.5,377V385M908.5,373V382M909.5,369V382M910.5,374V382M911.5,377V382M912.5,377V391M913.5,370V383M914.5,377V386M915.5,376V384M916.5,380V396M917.5,371V388M918.5,384V390M919.5,383V393M920.5,389V395M921.5,392V398M922.5,391V401M958.5,374V382M959.5,368V383M960.5,376V383M961.5,376V382M962.5,376V382M963.5,365V382M964.5,376V386M965.5,375V384M966.5,375V381M967.5,375V381M968.5,364V381M969.5,375V382M970.5,374V395M971.5,374V383M972.5,368V380M973.5,374V389M974.5,370V380M975.5,373V380M976.5,373V379M977.5,373V387M978.5,363V379M979.5,373V379M980.5,365V379M981.5,373V379M982.5,363V378M983.5,371V379M984.5,373V384M985.5,362V378M986.5,372V384M987.5,367V378M988.5,369V378M989.5,372V378M990.5,372V378M991.5,372V389M992.5,371V378M993.5,372V377M994.5,372V377M995.5,371V384M996.5,372V379M997.5,356V377M998.5,371V377M999.5,371V377M1000.5,371V391M1001.5,371V380M1002.5,369V377M1003.5,364V377M1004.5,371V386M1005.5,361V377M1006.5,365V376M1007.5,371V386M1008.5,371V376M1009.5,371V376M1010.5,366V376M1011.5,364V376M1012.5,367V376M1013.5,370V379M1014.5,357V376M1015.5,370V381M1016.5,370V377M1017.5,370V387M1018.5,365V376M1019.5,364V376M1020.5,370V376M1021.5,364V376M1022.5,370V379M1023.5,370V376M1024.5,365V376M1025.5,357V376M1026.5,370V376M1027.5,363V375M1028.5,361V376M1029.5,369V384M1030.5,364V376M1031.5,364V376M1032.5,370V376M1033.5,365V375M1034.5,365V375M1035.5,370V380M1036.5,369V375M1037.5,370V389M1038.5,367V375M1039.5,370V384M1040.5,365V375M1041.5,354V376M1042.5,369V390M1043.5,370V380M1044.5,369V381M1045.5,367V375M1046.5,369V389M1047.5,360V375M1048.5,369V383M1049.5,369V376M1050.5,370V375M1051.5,369V375M1052.5,369V379M1053.5,369V375M1054.5,369V378M1055.5,369V375M1056.5,363V375M1057.5,369V382M1058.5,369V379M1059.5,369V377M1060.5,354V375M1061.5,359V375M1062.5,369V375M1063.5,369V386M1064.5,369V379M1065.5,369V378M1066.5,369V387M1067.5,369V375M1068.5,369V381M1069.5,369V382M1070.5,369V375M1071.5,364V375M1072.5,363V375M1073.5,359V375M1074.5,369V375M1075.5,369V383M1076.5,369V382M1077.5,369V375M1078.5,369V375M1079.5,369V380M1080.5,369V380M1081.5,369V382M1082.5,369V375M1083.5,365V375M1084.5,369V378M1085.5,369V380M1086.5,369V375M1087.5,365V375M1088.5,369V379M1089.5,361V375M1090.5,363V375M1091.5,369V385M1092.5,369V380M1093.5,369V384M1094.5,364V375M1095.5,366V375M1096.5,369V379M1097.5,366V375M1098.5,369V375M1099.5,364V375M1100.5,369V379M1101.5,366V375M1102.5,365V375M1103.5,369V375M1104.5,355V375M1105.5,369V381M1106.5,369V382M1107.5,366V375M1108.5,369V377M1109.5,369V384M1110.5,369V391M1111.5,364V375M1112.5,356V375M1113.5,369V375M1114.5,369V379M1115.5,368V382M1116.5,369V388M1117.5,369V379M1118.5,364V375M1119.5,356V375M1120.5,360V375M1121.5,364V375M1122.5,359V375M1123.5,369V375M1124.5,369V384M1125.5,369V375M1126.5,359V375M1127.5,369V375M1128.5,366V375M1129.5,369V375M1130.5,369V382M1131.5,369V379M1132.5,368V377M1133.5,361V375M1134.5,365V375M1135.5,365V375M1136.5,369V375M1137.5,364V375M1138.5,357V375M1139.5,369V375M1140.5,366V375M1141.5,364V375M1142.5,369V379M1143.5,369V378M1144.5,356V375M1145.5,369V375M1146.5,369V379M1147.5,365V375M1148.5,369V375M1149.5,369V375M1150.5,369V375M1151.5,359V375M1152.5,369V375M1153.5,368V385M1154.5,364V375M1155.5,364V375M1156.5,368V375M1157.5,369V379M1158.5,367V375M1159.5,355V375M1160.5,360V375M1161.5,369V378M1162.5,369V380M1163.5,364V375M1164.5,361V375M1165.5,367V375M1166.5,368V384M1167.5,369V377M1168.5,364V375M1169.5,365V375M1170.5,369V384M1171.5,361V375M1172.5,369V378M1173.5,365V375M1174.5,369V375M1175.5,369V381M1176.5,369V381M1177.5,369V379M1178.5,369V383M1179.5,358V375M1180.5,368V377M1181.5,363V375M1182.5,357V375M1183.5,365V375M1184.5,368V375M1185.5,369V380M1186.5,369V379M1187.5,359V375M1188.5,369V378M1189.5,363V375M1190.5,369V375M1191.5,369V382M1192.5,362V375M1193.5,364V375M1194.5,369V382M1195.5,369V375M1196.5,369V378M1197.5,364V375M1198.5,369V375M1199.5,366V375M1200.5,367V375M1201.5,369V375M1202.5,369V375M1203.5,364V375M1204.5,365V375M1205.5,366V375M1206.5,369V378M1207.5,366V375M1208.5,369V375M1209.5,364V375M1210.5,366V375M1211.5,369V375M1212.5,369V383M1213.5,369V378M1214.5,369V384M1215.5,364V375M1216.5,369V381M1217.5,369V375M1218.5,369V379M1219.5,369V375M1220.5,369V380M1221.5,369V377M1222.5,369V380M1223.5,359V375M1224.5,369V375M1225.5,366V375M1226.5,368V378M1227.5,369V382M1228.5,369V383M1229.5,369V377M1230.5,366V375M1231.5,365V375M1232.5,369V381M1233.5,364V375M1234.5,366V375M1235.5,363V375M1236.5,359V375M1237.5,368V375M1238.5,364V375M1239.5,369V375M1240.5,369V375M1241.5,366V375M1242.5,368V379M1243.5,367V375M1244.5,369V378M1245.5,369V378M1246.5,366V375M1247.5,369V379M1248.5,369V377M1249.5,369V379M1250.5,368V375M1251.5,369V382M1252.5,369V375M1253.5,369V375M1254.5,369V375M1255.5,369V385M1256.5,369V375M1257.5,359V375M1258.5,369V375M1259.5,361V375" fill="none" stroke="#0a5ca8" stroke-width="1"/>
<path d="M447.5,383.1V388.2M448.5,386.2V397.8M449.5,389.5V394.6M450.5,393.6V399.1M451.5,398.8V405.5M452.5,405.2V412.3M453.5,412.0V421.8M454.5,421.5V441.4M455.5,438.3V466.6M456.5,466.3V483.3M457.5,483.0V505.1M458.5,504.8V532.5M459.5,532.2V546.7M460.5,541.6V550.9M461.5,518.0V541.9M462.5,485.5V518.3M463.5,433.0V489.8M464.5,410.0V433.3M465.5,341.3V410.3M466.5,303.8V341.6M467.5,256.3V304.1M468.5,200.7V256.6M469.5,178.4V201.0M470.5,158.4V178.7M471.5,150.3V162.6M472.5,162.3V183.9M473.5,183.6V217.7M474.5,217.4V246.8M475.5,246.5V284.3M476.5,284.0V296.3M477.5,296.0V323.4M478.5,323.1V340.0M479.5,339.7V349.4M480.5,349.1V356.3M481.5,356.0V363.2M482.5,359.1V370.0M483.5,369.6V374.9M484.5,371.5V378.9M523.5,393.3V398.3M524.5,390.9V401.6M525.5,400.4V405.7M526.5,402.5V411.8M527.5,411.5V418.3M528.5,418.0V427.4M529.5,422.2V446.2M530.5,445.9V470.4M531.5,470.1V486.4M532.5,486.1V507.2M533.5,506.9V533.6M534.5,533.3V547.1M535.5,541.8V551.1M536.5,518.3V542.1M537.5,485.7V518.6M538.5,433.1V486.0M539.5,410.0V433.4M540.5,342.1V410.3M541.5,305.4V342.4M542.5,258.9V305.7M543.5,204.6V259.2M544.5,182.8V204.9M545.5,163.2V183.1M546.5,155.3V167.3M547.5,167.0V188.1M548.5,187.8V221.2M549.5,220.9V249.7M550.5,249.4V286.4M551.5,284.8V298.1M552.5,297.8V324.7M553.5,324.4V340.8M554.5,340.5V350.1M555.5,349.8V356.8M556.5,356.5V363.5M557.5,363.2V370.2M558.5,364.6V375.1M559.5,373.8V379.0M605.5,393.2V398.5M606.5,396.2V401.7M607.5,400.4V405.7M608.5,405.3V411.8M609.5,411.5V418.3M610.5,418.0V427.4M611.5,426.2V446.2M612.5,445.9V470.4M613.5,470.1V486.4M614.5,486.1V508.3M615.5,506.9V533.6M616.5,533.3V547.1M617.5,541.8V551.1M618.5,518.3V542.1M619.5,485.7V518.6M620.5,433.1V486.0M621.5,404.2V433.4M622.5,341.6V410.3M623.5,304.5V341.9M624.5,257.4V304.8M625.5,202.4V257.7M626.5,180.2V202.7M627.5,160.4V180.5M628.5,152.4V164.5M629.5,164.2V185.7M630.5,185.4V219.2M631.5,218.9V249.7M632.5,247.7V285.2M633.5,284.9V297.1M634.5,296.8V324.0M635.5,323.7V340.3M636.5,340.0V349.7M637.5,349.4V356.5M638.5,356.2V363.3M639.5,363.0V370.1M640.5,369.7V375.0M641.5,373.6V379.0M686.5,391.4V396.5M687.5,394.5V399.7M688.5,397.6V404.1M689.5,401.6V408.1M690.5,405.9V414.3M691.5,414.0V422.0M692.5,421.7V431.1M693.5,430.8V456.3M694.5,456.0V476.8M695.5,476.5V492.8M696.5,492.5V516.9M697.5,514.9V541.1M698.5,540.8V551.1M699.5,533.7V551.1M700.5,506.3V535.2M701.5,465.9V506.6M702.5,419.2V466.2M703.5,384.7V419.5M704.5,326.1V385.0M705.5,287.6V326.4M706.5,225.0V287.8M707.5,191.2V225.3M708.5,169.9V191.5M709.5,149.8V171.9M710.5,149.8V170.0M711.5,169.7V197.2M712.5,196.9V229.0M713.5,228.7V261.6M714.5,261.3V290.6M715.5,290.3V305.8M716.5,305.5V331.8M717.5,331.5V345.2M718.5,344.9V352.1M719.5,351.8V359.0M720.5,358.7V365.9M721.5,365.6V372.8M722.5,366.8V376.9M723.5,375.1V381.6M766.5,390.9V396.1M767.5,394.0V399.2M768.5,397.2V402.3M769.5,401.1V407.4M770.5,407.1V413.4M771.5,413.1V423.2M772.5,420.5V429.8M773.5,429.5V454.2M774.5,453.9V474.3M775.5,474.0V489.9M776.5,489.6V513.2M777.5,513.0V536.9M778.5,536.6V546.6M779.5,529.6V546.6M780.5,502.9V529.9M781.5,463.6V503.2M782.5,418.1V463.9M783.5,384.5V418.4M784.5,327.3V384.8M785.5,288.6V327.6M786.5,228.4V289.8M787.5,195.3V228.7M788.5,173.1V195.6M789.5,154.8V174.8M790.5,154.8V174.6M791.5,174.3V201.2M792.5,200.9V232.3M793.5,232.0V264.1M794.5,263.8V292.5M795.5,292.2V307.4M796.5,307.1V332.9M797.5,332.6V346.0M798.5,345.7V352.7M799.5,350.5V359.4M800.5,359.1V366.2M801.5,365.9V372.9M802.5,371.8V377.0M803.5,375.2V380.4M842.5,392.4V397.5M843.5,395.3V400.9M844.5,399.3V404.6M845.5,404.0V410.3M846.5,404.4V416.3M847.5,416.0V425.2M848.5,424.9V441.8M849.5,441.5V469.7M850.5,465.9V481.8M851.5,481.5V501.2M852.5,500.9V526.4M853.5,524.2V541.3M854.5,538.6V546.1M855.5,516.7V538.9M856.5,485.9V517.0M857.5,436.9V486.2M858.5,410.6V437.2M859.5,345.7V410.9M860.5,308.9V346.0M861.5,266.3V309.2M862.5,206.5V266.6M863.5,184.3V206.8M864.5,164.7V184.6M865.5,154.8V165.0M866.5,164.6V184.3M867.5,184.0V218.0M868.5,217.7V246.6M869.5,246.3V282.5M870.5,282.2V297.0M871.5,296.7V321.7M872.5,321.4V339.4M873.5,339.1V349.3M874.5,347.9V356.1M875.5,355.8V362.8M876.5,362.5V369.5M877.5,369.2V374.6M878.5,373.6V378.8M923.5,399.0V404.3M924.5,403.8V409.9M925.5,409.6V416.0M926.5,415.7V424.7M927.5,424.4V445.5M928.5,442.0V467.1M929.5,464.8V480.2M930.5,479.9V499.8M931.5,499.5V524.6M932.5,524.3V537.4M933.5,532.4V541.1M934.5,510.2V532.7M935.5,479.5V510.5M936.5,430.0V479.8M937.5,408.2V430.3M938.5,343.3V408.5M939.5,307.9V343.6M940.5,263.0V308.2M941.5,210.5V263.3M942.5,189.4V210.8M943.5,170.4V189.7M944.5,162.8V174.4M945.5,174.1V194.5M946.5,194.2V226.5M947.5,226.2V254.1M948.5,253.8V289.5M949.5,289.2V300.8M950.5,300.5V326.5M951.5,326.2V342.1M952.5,341.8V351.1M953.5,350.8V357.6M954.5,357.3V364.1M955.5,363.8V370.6M956.5,370.1V375.3M957.5,374.1V381.4" fill="none" stroke="#0a5ca8" stroke-width="1.65"/>
<path d="M468.2,239.6L473.2,244.6L468.2,249.6L463.2,244.6Z" fill="#f2ea00" stroke="#2040b0" stroke-width="0.9"/>
<path d="M388,109.5H416L425,116.5L416,123.5H388Q385.5,123.5 385.5,121V112Q385.5,109.5 388,109.5Z" fill="#fff" stroke="#0d5596" stroke-width="1.4"/>
<path d="M416.5,109.5L425,116.5L416.5,123.5Z" fill="#0d5596"/>
<path d="M398.5,646V629.5Q398.5,626.5 401.5,626.5H430Q433,626.5 433,629.5V646" fill="none" stroke="#0d5596" stroke-width="1.3"/>
<path d="M410.5,626.5L417.2,619.3L424,626.5Z" fill="#0d5596"/>
<circle cx="1228.5" cy="138.4" r="6.3" fill="none" stroke="#0d5596" stroke-width="3.3"/>
<path d="M1233,143L1241.8,151.8" stroke="#0d5596" stroke-width="4.4" stroke-linecap="square"/>
<path d="M1228.5,135V141.8M1225.1,138.4H1231.9" stroke="#0d5596" stroke-width="2.2"/>
</svg>
<div class="t" style="left:388.10px;top:161.01px;font-size:11.4px;color:#1d5e9c;">160,0</div>
<div class="t" style="left:388.10px;top:212.01px;font-size:11.4px;color:#1d5e9c;">120,0</div>
<div class="t" style="left:394.43px;top:263.01px;font-size:11.4px;color:#1d5e9c;">80,0</div>
<div class="t" style="left:394.43px;top:314.01px;font-size:11.4px;color:#1d5e9c;">40,0</div>
<div class="t" style="left:400.75px;top:365.01px;font-size:11.4px;color:#1d5e9c;">0,0</div>
<div class="t" style="left:390.61px;top:416.01px;font-size:11.4px;color:#1d5e9c;">-40,0</div>
<div class="t" style="left:390.61px;top:467.01px;font-size:11.4px;color:#1d5e9c;">-80,0</div>
<div class="t" style="left:384.28px;top:518.01px;font-size:11.4px;color:#1d5e9c;">-120,0</div>
<div class="t" style="left:384.28px;top:569.01px;font-size:11.4px;color:#1d5e9c;">-160,0</div>
<div class="t" style="left:383.97px;top:620.01px;font-size:11.4px;color:#1d5e9c;transform:scaleX(1.025);transform-origin:0 0;">-200,0</div>
<div class="t" style="left:387.42px;top:110.21px;font-size:11.4px;color:#1d5e9c;transform:scaleX(1.017);transform-origin:0 0;">200,0</div>
<div class="t" style="left:400.84px;top:128.01px;font-size:11.4px;color:#1d5e9c;transform:scaleX(1.073);transform-origin:0 0;">мВ</div>
<div class="t" style="left:458.93px;top:631.11px;font-size:11.4px;color:#222;transform:scaleX(1.033);transform-origin:0 0;">0,0 c</div>
<div class="t" style="left:543.20px;top:631.11px;font-size:11.4px;color:#222;">2,0</div>
<div class="t" style="left:627.68px;top:631.11px;font-size:11.4px;color:#222;">4,0</div>
<div class="t" style="left:711.82px;top:631.11px;font-size:11.4px;color:#222;">6,0</div>
<div class="t" style="left:796.16px;top:631.11px;font-size:11.4px;color:#222;">8,0</div>
<div class="t" style="left:877.14px;top:631.11px;font-size:11.4px;color:#222;">10,0</div>
<div class="t" style="left:961.45px;top:631.11px;font-size:11.4px;color:#222;">12,0</div>
<div class="t" style="left:1045.76px;top:631.11px;font-size:11.4px;color:#222;">14,0</div>
<div class="t" style="left:1130.07px;top:631.11px;font-size:11.4px;color:#222;">16,0</div>
<div class="t" style="left:1214.38px;top:631.11px;font-size:11.4px;color:#222;">18,0</div>
<div class="a" style="left:10px;top:646px;width:1270px;height:1px;background:#7a7a7a"></div>
<div class="a" style="left:1279px;top:105px;width:1px;height:542px;background:#8a8a8a"></div>

</body></html>
